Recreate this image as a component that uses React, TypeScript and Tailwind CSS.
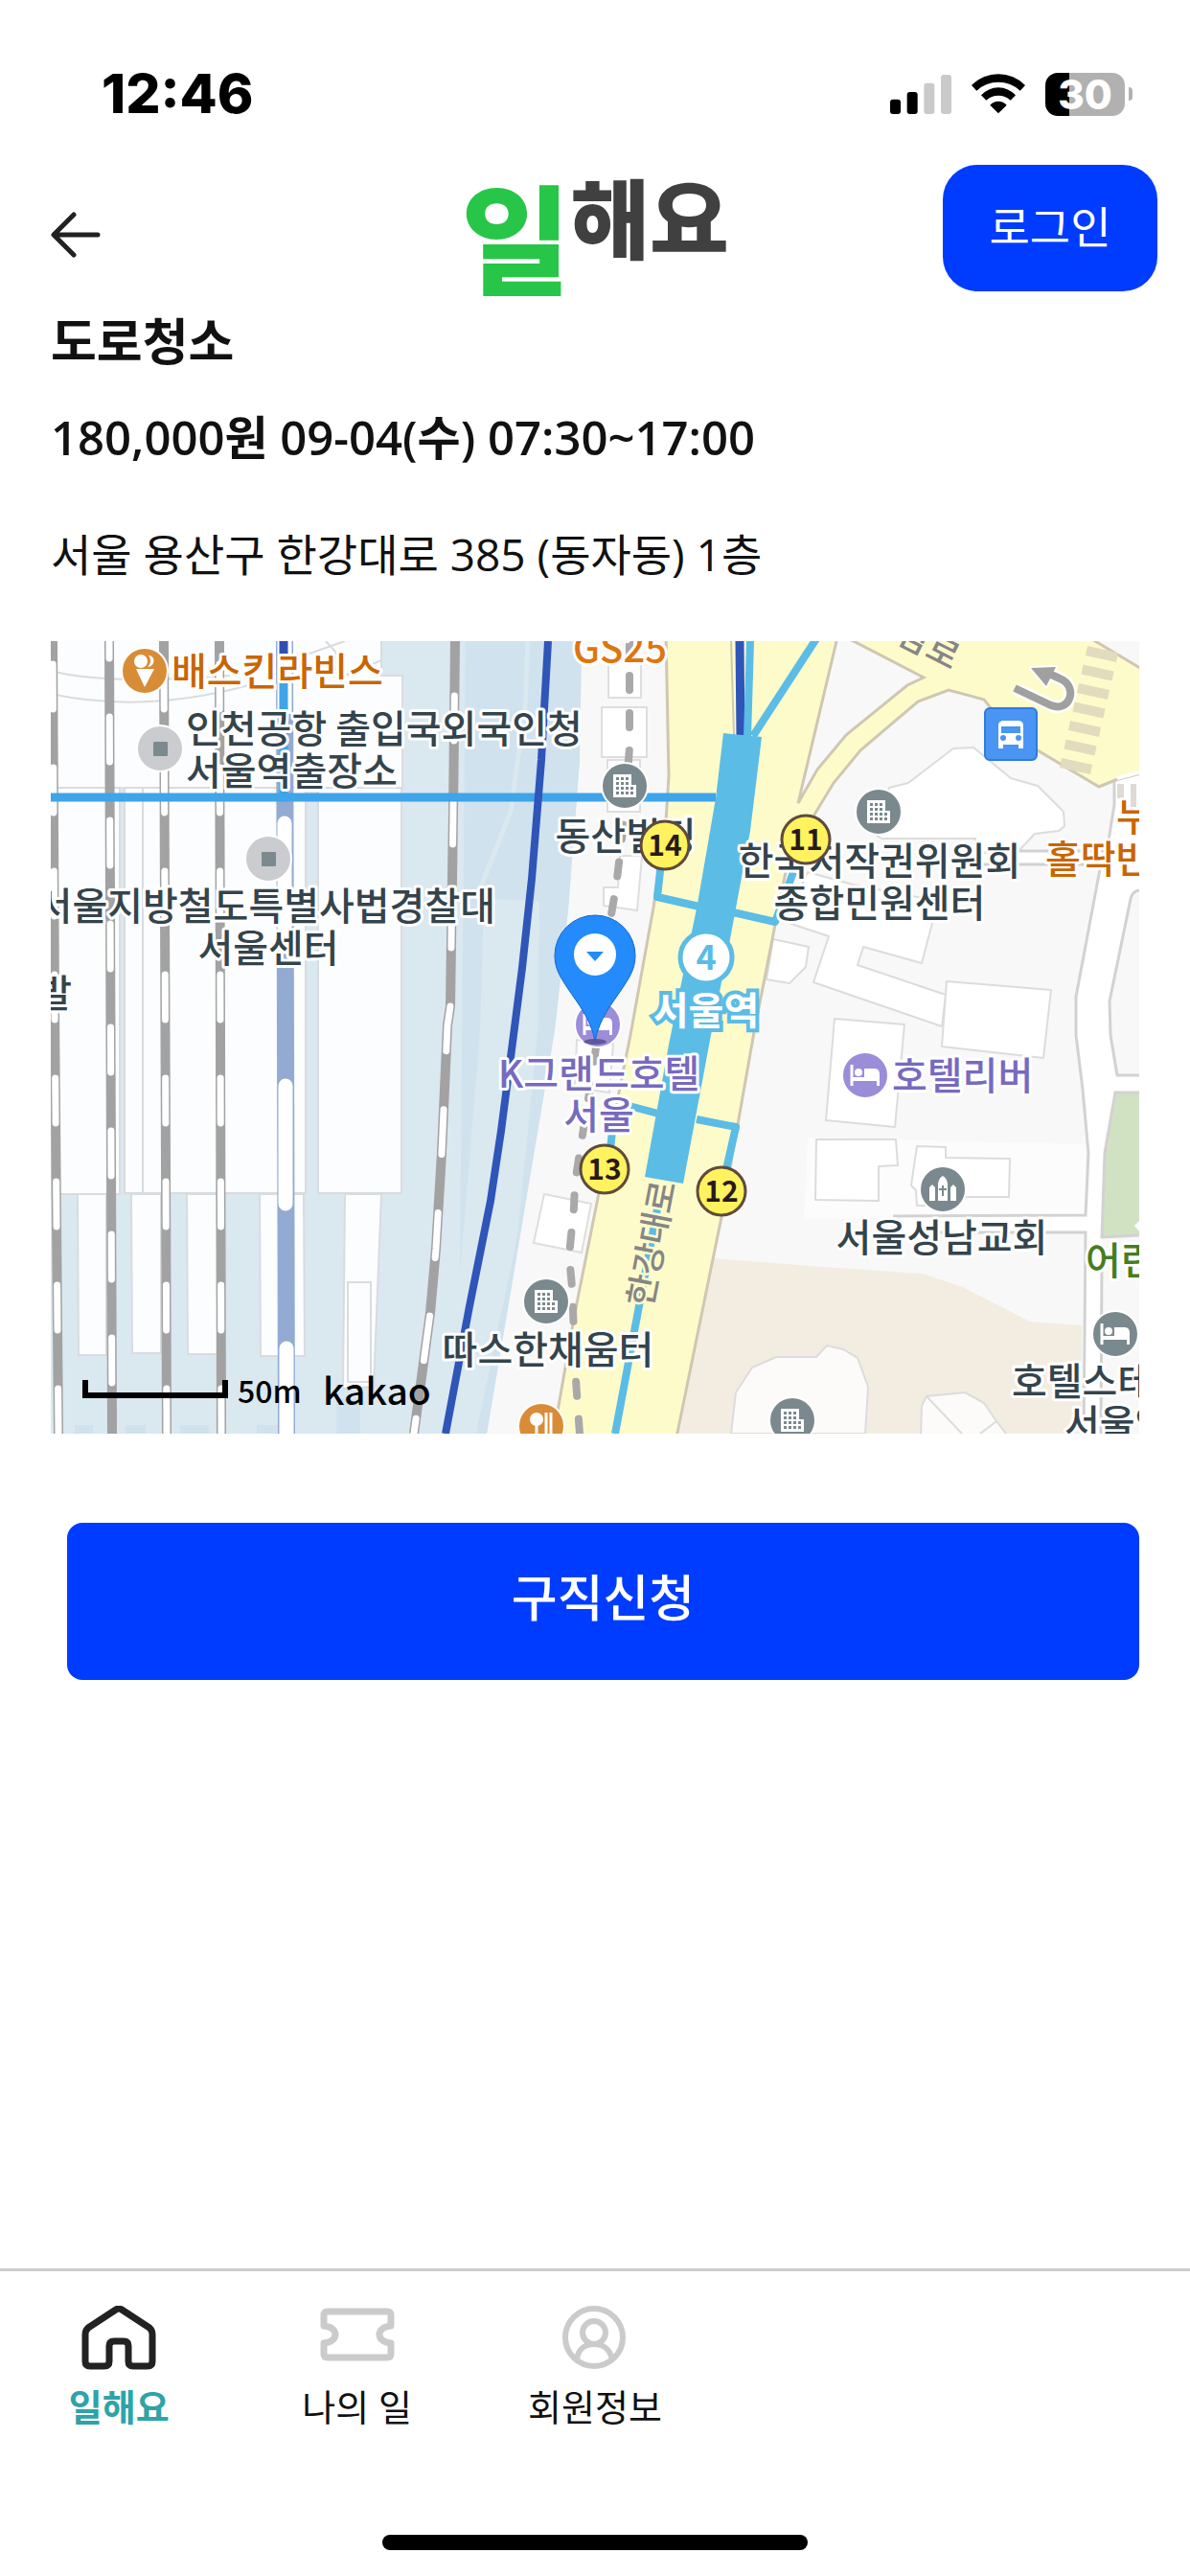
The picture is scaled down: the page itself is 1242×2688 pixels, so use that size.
import type { ReactNode } from "react";

const INK = "#34444c";
const ORANGE = "#c96500";
const PURPLE = "#776abf";

function StatusBar() {
  return (
    <div className="flex items-center justify-between pt-[70px] pr-[60px] pl-[106px]">
      <time className="font-[Inter] text-[57px] leading-[56px] font-extrabold text-black">12:46</time>
      <div className="flex items-center">
        <svg className="h-[41px] w-[64px]" viewBox="0 0 192 123" aria-label="Signal" role="img">
          <rect x="0" y="77" width="33" height="46" rx="9" fill="#000" />
          <rect x="53" y="54" width="33" height="69" rx="9" fill="#000" />
          <rect x="106" y="26" width="33" height="97" rx="9" fill="#cacaca" />
          <rect x="159" y="0" width="33" height="123" rx="9" fill="#cacaca" />
        </svg>
        <svg className="ml-[21px] h-[42px] w-[56px]" viewBox="0 0 168 126" aria-label="Wi-Fi" role="img">
          <path d="M0 36A118 118 0 0 1 168 36L152 53A99 99 0 0 0 16 53Z" />
          <path d="M30 67A73 73 0 0 1 138 67L122 83A56 56 0 0 0 46 83Z" />
          <path d="M58 98A34 34 0 0 1 110 98L84 124Z" />
        </svg>
        <div className="ml-[21px] flex items-center gap-1">
          <div className="flex h-[45px] w-[83px] items-center justify-center rounded-[13px] bg-[linear-gradient(90deg,#000_30%,#b1b1b1_30%)] font-[Inter] text-[42px] leading-[45px] font-extrabold text-white">
            30
          </div>
          <div className="h-[14px] w-[4px] rounded-r-full bg-[#b1b1b1]" />
        </div>
      </div>
    </div>
  );
}

function BuildingPoi({ x, y }: { x: number; y: number }) {
  const dots: ReactNode[] = [];
  for (let r = 0; r < 4; r++) {
    for (let c = 0; c < 4; c++) {
      if (c === 3 && r < 2) continue;
      dots.push(<rect key={`${r}-${c}`} x={-9 + c * 5} y={-9 + r * 5} width="3" height="3" fill="#7a898e" />);
    }
  }
  return (
    <g transform={`translate(${x} ${y})`}>
      <circle r="24" fill="#7a898e" stroke="#fff" strokeWidth="2" />
      <path d="M-12 -12H7V-1H12V12H-12Z" fill="#fff" />
      {dots}
    </g>
  );
}

function BedPoi({ x, y, color }: { x: number; y: number; color: string }) {
  return (
    <g transform={`translate(${x} ${y})`}>
      <circle r="24" fill={color} stroke="#fff" strokeWidth="2" />
      <path d="M-14 -11V11" stroke="#fff" strokeWidth="3" />
      <path d="M-1 -7H10Q15 -7 15 -1V11H12V6H-14V2H-1Z" fill="#fff" />
      <circle cx="-7" cy="-3" r="4" fill="#fff" />
    </g>
  );
}

function PlainPoi({ x, y }: { x: number; y: number }) {
  return (
    <g>
      <circle cx={x} cy={y} r="24" fill="#cbccd0" stroke="#fff" strokeWidth="2" />
      <rect x={x - 7} y={y - 7} width="15" height="15" rx="1" fill="#7b8a8f" />
    </g>
  );
}

function ExitBadge({ x, y, n }: { x: number; y: number; n: number }) {
  return (
    <g>
      <circle cx={x} cy={y} r="25" fill="#fef35f" stroke="#5f4a3c" strokeWidth="3" />
      <text x={x} y={y + 11} textAnchor="middle" fontSize="30" fontWeight="700" fill="#2b1818">
        {n}
      </text>
    </g>
  );
}

type Label = { x: number; y: number; t: string; c?: string; a?: "start" | "middle" | "end" };

const LABELS: Label[] = [
  { x: 179, y: 715, t: "배스킨라빈스", c: ORANGE, a: "start" },
  { x: 194, y: 775, t: "인천공항 출입국외국인청", a: "start" },
  { x: 194, y: 819, t: "서울역출장소", a: "start" },
  { x: 517, y: 960, t: "서울지방철도특별사법경찰대", a: "end" },
  { x: 280, y: 1004, t: "서울센터" },
  { x: 75, y: 1051, t: "발", a: "end" },
  { x: 647, y: 691, t: "GS25", c: "#e0740f" },
  { x: 653, y: 887, t: "동산빌딩" },
  { x: 918, y: 913, t: "한국저작권위원회" },
  { x: 918, y: 957, t: "종합민원센터" },
  { x: 1165, y: 867, t: "누", c: ORANGE, a: "start" },
  { x: 1091, y: 911, t: "홀딱반", c: ORANGE, a: "start" },
  { x: 625, y: 1135, t: "K그랜드호텔", c: PURPLE },
  { x: 625, y: 1178, t: "서울", c: PURPLE },
  { x: 931, y: 1137, t: "호텔리버", c: PURPLE, a: "start" },
  { x: 983, y: 1306, t: "서울성남교회" },
  { x: 1133, y: 1330, t: "어린", c: "#467d22", a: "start" },
  { x: 572, y: 1423, t: "따스한채움터" },
  { x: 1056, y: 1456, t: "호텔스테", a: "start" },
  { x: 1111, y: 1500, t: "서울역", a: "start" },
];

const RAILS = [
  { d: "M55 669L57 1050L61 1496", o: -24 },
  { d: "M114 669L117 1496", o: 29 },
  { d: "M171 669L174 1496", o: -24 },
  { d: "M229 669L231 1496", o: -24 },
  { d: "M475 669L473 850L470 1050L467 1070L461 1203L455 1303L449 1370L440 1437L432 1496", o: -57 },
];

function StationMap() {
  return (
    <svg
      className="block h-auto w-full font-['Noto_Sans_CJK_KR',sans-serif]"
      viewBox="53 669 1136 827"
      role="img"
      aria-label="서울역 주변 지도"
    >
      <rect x="53" y="669" width="1136" height="827" fill="#f8f8f8" />

      {/* rail yard */}
      <path d="M53 669H607L605 793L593 950L579 1075L508 1496H53Z" fill="#dae8f0" />
      <path d="M486 669H607L605 793L593 950L579 1075L508 1496H497L540 1290L562 1070L563 940L505 938L501 1075L480 1330Z" fill="#cfe2ee" />
      <path d="M551 669L548 737L533 847L500 930" fill="none" stroke="#dae8f0" strokeWidth="5" />
      <g fill="#fbfdff" stroke="#d9dcde" strokeWidth="2">
        <path d="M53 669H398V705H420V821H319H53Z" strokeWidth="0" />
        <path d="M398 669V705H420V825" fill="none" />
        <path d="M53 822H125V1246H53Z" />
        <path d="M130 822H319V1245H130Z" />
        <path d="M332 822H419V1245H332Z" />
        <path d="M149 822V1245M53 700Q110 715 240 705M53 724Q150 745 260 715M300 690L360 669M340 669L350 680V700M398 689L360 705" fill="none" />
        <path d="M81 1246H111V1414H82ZM137 1246H168V1412H138ZM195 1246H227V1413H196ZM271 1246H317L318 1415H272ZM360 1246H398L390 1447L358 1449Z" />
        <path d="M363 1338H387V1442H363Z" />
      </g>
      <path d="M78 1487H97V1496H78ZM131 1487H152V1496H131ZM188 1487H218V1496H188ZM268 1487H290V1496H268ZM351 1460H376V1496H351Z" fill="#cfe2ee" />

      {RAILS.map((r) => (
        <g key={r.d} fill="none">
          <path d={r.d} stroke="#a2a2a2" strokeWidth="10" />
          <path d={r.d} stroke="#fff" strokeWidth="7" strokeLinecap="round" strokeDasharray="47 61" strokeDashoffset={r.o} />
        </g>
      ))}
      <path d="M297 669L299 1496" stroke="#93abd2" strokeWidth="18" />
      <path d="M297 669V745" stroke="#fff" strokeWidth="15" />
      <path d="M297 859V982M298 1133V1256M299 1407V1496" stroke="#fff" strokeWidth="15" strokeLinecap="round" />
      <path d="M296 669V683" stroke="#2f4fb5" strokeWidth="9" />
      <path d="M296 712V832" stroke="#3fa4e8" strokeWidth="9" />

      {/* sidewalk blocks */}
      <g fill="#fff" stroke="#dedede" strokeWidth="2">
        <path d="M635 690H669V728H635ZM628 738H675V790H628ZM634 793H668V847H634ZM647 893H670L665 950L630 945V926H645Z" />
        <path d="M568 1246L617 1256L607 1307L557 1297ZM602 1085L640 1089L636 1140L600 1135Z" />
      </g>

      {/* buildings and lanes on the east side */}
      <path d="M843 1187L1133 1194V1268L839 1272Z" fill="#fcfcfc" />
      <path d="M1164 814L1163 840L1148 907L1123 1040V1080L1130 1137L1136 1203L1133 1268H932V1286H1133L1131 1496H1149L1150 1291L1153 1203L1164 1140H1189V1122H1166L1159 1080L1158 1045L1180 938L1189 929V806Z" fill="#fff" />
      <path d="M1063 889H1155V902H1020V889Z" fill="#fff" />
      <path d="M1189 1140H1164L1153 1203L1150 1291L1189 1289Z" fill="#d1e2c3" />
      <g fill="none" stroke="#d2d2d2" strokeWidth="3">
        <path d="M1163 815V840L1156 883M1148 907L1123 1040V1080L1130 1137L1136 1203L1133 1268L932 1269" />
        <path d="M1189 929Q1182 930 1180 938L1158 1045L1159 1080L1166 1122H1189M1189 1140H1164L1153 1203L1150 1291L1189 1289" />
        <path d="M970 1286H1133L1131 1496M1150 1310L1149 1496M1063 888H1155M1020 902H1148" />
      </g>
      <g fill="#fff" stroke="#dcdcdc" strokeWidth="2" strokeLinejoin="round">
        <path d="M915 872L928 822L948 817L995 781L1016 780L1055 812L1083 820L1110 847L1111 862L1105 867L1080 870L1063 888L1020 890L1018 875H920Z" />
        <path d="M843 910L890 923L978 940L973 963L962 1005L901 988L895 1007L987 1038L983 1071L849 1025L865 977L820 962Z" />
        <path d="M807 980L844 988L841 1009L824 1026L800 1022Z" />
        <path d="M988 1024L1097 1033L1089 1104L983 1092Z" />
        <path d="M871 1063L944 1069L934 1176L862 1169Z" />
        <path d="M852 1189H935L937 1216L917 1217V1253L851 1252Z" />
        <path d="M957 1196L987 1197V1208L1054 1209L1053 1249H1000V1258H957L956 1242L951 1237Z" />
      </g>
      <path d="M743 1313L860 1322L963 1329L1005 1343L1075 1379L1129 1383V1496H707Z" fill="#f3ede1" />
      <g fill="#fcfbf9" stroke="#dcdcdc" strokeWidth="2">
        <path d="M763 1496L768 1453L785 1427L810 1416H852L863 1404L880 1408L895 1417L906 1447L903 1496Z" />
        <path d="M961 1496L962 1467L967 1457L1007 1453L1027 1464L1040 1483L1050 1496" />
        <path d="M967 1457L1004 1496M1040 1483L1023 1496" />
      </g>

      {/* main road */}
      <path
        fillRule="evenodd"
        fill="#fefbcb"
        stroke="#cfc7b2"
        strokeWidth="3"
        d="M695 660L698 810L695 857L682 947L658 1080L600 1370L583 1467L577 1500H706L753 1270L787 1077L808 970L820 910L832 880L850 850L870 817L898 783L958 732L990 720L1027 730L1035 740L1083 783L1147 821L1164 814L1195 806V700L1143 669L1130 660ZM874 665L833 838L853 803L883 767L947 715L964 707L885 666Z"
      />
      <path d="M763 669L766 767" stroke="#cfc7b2" strokeWidth="2" />
      <path d="M1166 812L1189 806" stroke="#fff" strokeWidth="4" />
      <g stroke="#e2dbbd" strokeWidth="10">
        {[0, 1, 2, 3, 4, 5, 6].map((i) => (
          <path key={i} d={`M${1134 - i * 4.5} ${679 + i * 19.5}l32 7`} />
        ))}
      </g>
      <path d="M1166 818H1173V833H1166ZM1180 818H1186V842H1180Z" fill="#dedad4" />
      <path
        d="M657 669V780L652 850L643 925L637 960L620 1110L607 1190L600 1235L599 1260L594 1310L597 1343L601 1440L605 1496"
        fill="none"
        stroke="#aaa8a8"
        strokeWidth="8"
        strokeLinecap="round"
        strokeDasharray="15 24"
        strokeDashoffset="3"
      />

      {/* subway lines */}
      <path d="M53 832H747" stroke="#3fa4e8" strokeWidth="9" />
      <path d="M572 669L565 793L555 917L545 1010L536 1080L523 1180L512 1253L490 1363L465 1496" fill="none" stroke="#2f55b8" strokeWidth="8" />
      <path d="M772 669L773 770" stroke="#2f55b8" strokeWidth="9" />
      <g fill="none" stroke="#5bbce6" strokeWidth="8" strokeLinejoin="round">
        <path d="M783 669L780 770M853 665L786 768" />
        <path d="M690 900L686 936L730 946M765 952L809 962L828 910" />
        <path d="M637 1200L640 1170L653 1153L687 1162M727 1168L768 1176L758 1220" />
        <path d="M690 1240L642 1496" />
      </g>
      <path d="M755 765L795 769L783 867L762 980L742 1080L713 1235L673 1228L698 1090L728 943L747 833Z" fill="#5bbce6" />

      {/* U-turn mark and bus stop */}
      <g stroke="#fff" strokeWidth="4" strokeLinejoin="round" paintOrder="stroke">
        <path d="M1059 718L1097 736C1117 744 1126 716 1106 708L1095 703" fill="none" strokeWidth="13" />
        <path d="M1076 697L1102 696L1092 716Z" fill="#a0a0a0" />
        <path d="M1059 718L1097 736C1117 744 1126 716 1106 708L1095 703" fill="none" stroke="#a0a0a0" strokeWidth="8" strokeLinejoin="miter" />
      </g>
      <rect x="1028" y="739" width="54" height="54" rx="5" fill="#4a94f3" stroke="#2f7bdb" strokeWidth="2" />
      <path d="M1042 757Q1042 752 1048 752H1062Q1068 752 1068 757V781H1063V777H1047V781H1042Z" fill="#fff" />
      <path d="M1045 758H1065V765H1045Z" fill="#4a94f3" />
      <circle cx="1047" cy="770" r="3" fill="#4a94f3" />
      <circle cx="1063" cy="770" r="3" fill="#4a94f3" />

      {/* street names */}
      <g fill="#868686" fontSize="36" fontWeight="500" stroke="#fefbcb" strokeWidth="5" paintOrder="stroke" textAnchor="middle">
        <text transform="translate(693 1300) rotate(-79)">한강대로</text>
        <text transform="translate(949 677) rotate(27)">후암로</text>
      </g>

      {/* points of interest */}
      <circle cx="151" cy="700" r="24" fill="#d98c36" stroke="#fff" strokeWidth="2" />
      <path d="M142 698H161L151 717Z" fill="#fff" />
      <circle cx="147" cy="690" r="7" fill="#fff" />
      <path d="M155 684C162 684 163 695 154 696C158 692 158 688 155 684Z" fill="#fff" />
      <PlainPoi x={167} y={781} />
      <PlainPoi x={280} y={896} />
      <BuildingPoi x={652} y={820} />
      <BuildingPoi x={917} y={847} />
      <BuildingPoi x={570} y={1358} />
      <BuildingPoi x={827} y={1482} />
      <BedPoi x={903} y={1122} color="#9b8dd8" />
      <BedPoi x={624} y={1069} color="#9b8dd8" />
      <BedPoi x={1164} y={1392} color="#7a898e" />
      <circle cx="984" cy="1241" r="24" fill="#7a898e" stroke="#fff" strokeWidth="2" />
      <path d="M979 1253V1235Q980 1229 984 1227Q988 1229 989 1235V1253ZM970 1253V1239L973 1236L976 1239V1253ZM992 1253V1239L995 1236L998 1239V1253Z" fill="#fff" />
      <path d="M984 1237V1248M980 1241H988" stroke="#7a898e" strokeWidth="2" />
      <circle cx="565" cy="1488" r="24" fill="#d98c36" stroke="#fff" strokeWidth="2" />
      <circle cx="560" cy="1481" r="7" fill="#fff" />
      <path d="M560 1485V1500M570 1474V1500M575 1474V1500" stroke="#fff" strokeWidth="3" />
      <path d="M1184 1279L1189 1274V1285Z" fill="#fff" />

      <g fontSize="40" fontWeight="500" stroke="#fff" strokeWidth="6" strokeLinejoin="round" paintOrder="stroke">
        {LABELS.map((l) => (
          <text key={`${l.t}-${l.y}`} x={l.x} y={l.y} textAnchor={l.a ?? "middle"} fill={l.c ?? INK}>
            {l.t}
          </text>
        ))}
      </g>

      <circle cx="737" cy="999" r="27" fill="#fff" stroke="#5bbce6" strokeWidth="5" />
      <text x="737" y="1012" textAnchor="middle" fontSize="36" fontWeight="700" fill="#5bbce6">
        4
      </text>
      <text x="737" y="1069" textAnchor="middle" fontSize="40" fontWeight="700" fill="#fff" stroke="#5bbce6" strokeWidth="8" paintOrder="stroke">
        서울역
      </text>
      <ExitBadge x={694} y={882} n={14} />
      <ExitBadge x={841} y={876} n={11} />
      <ExitBadge x={631} y={1220} n={13} />
      <ExitBadge x={753} y={1243} n={12} />

      {/* location pin */}
      <ellipse cx="621" cy="1087" rx="12" ry="3" fill="#3d3470" opacity="0.6" />
      <path d="M621 1086C616 1062 603 1047 593 1032C585 1020 579 1011 579 997A42 42 0 0 1 663 997C663 1011 657 1020 649 1032C639 1047 626 1062 621 1086Z" fill="#238bfb" stroke="#1766cc" strokeWidth="1" />
      <circle cx="621" cy="996" r="22" fill="#fff" />
      <path d="M612 993H630L621 1003Z" fill="#238bfb" />

      {/* scale */}
      <path d="M89 1440V1456H235V1440" fill="none" stroke="#000" strokeWidth="6" />
      <text x="248" y="1464" fontSize="32" fontWeight="500">
        50m
      </text>
      <text x="337" y="1466" fontSize="39" fontWeight="500">
        kakao
      </text>
    </svg>
  );
}

function HomeIcon() {
  return (
    <svg className="h-[67px] w-[78px]" viewBox="0 0 78 67" fill="none" stroke="#222" strokeWidth="7" strokeLinejoin="round">
      <path d="M4 30Q4 26 7 23L36 4Q39 2 42 4L71 23Q74 26 74 30V58Q74 63 69 63H54Q49 63 49 58V42Q49 37 44 37H34Q29 37 29 42V58Q29 63 24 63H9Q4 63 4 58Z" />
    </svg>
  );
}

function TicketIcon() {
  return (
    <svg className="h-[67px] w-[78px]" viewBox="0 0 78 67" fill="none" stroke="#cbcbcb" strokeWidth="7" strokeLinejoin="round">
      <path d="M8 6H70Q74 6 74 10V21C58 22 58 38 74 39V50Q74 54 70 54H8Q4 54 4 50V39C20 38 20 22 4 21V10Q4 6 8 6Z" />
    </svg>
  );
}

function UserIcon() {
  return (
    <svg className="h-[67px] w-[67px]" viewBox="0 0 67 67" fill="none" stroke="#cbcbcb" strokeWidth="6">
      <circle cx="33" cy="33" r="30" />
      <circle cx="33" cy="28" r="12" />
      <path d="M15 57C16 45 24 40 33 40S50 45 52 57" />
    </svg>
  );
}

function Tab({ label, icon, active = false }: { label: string; icon: ReactNode; active?: boolean }) {
  return (
    <a href="#" aria-current={active ? "page" : undefined} className="flex w-1/5 flex-col items-center gap-[10px]">
      {icon}
      <span className={active ? "text-[38px] leading-[56px] font-bold text-[#2fa3a8]" : "text-[38px] leading-[56px] text-[#111]"}>
        {label}
      </span>
    </a>
  );
}

export default function App() {
  return (
    <div className="flex min-h-screen flex-col bg-white font-['Open_Sans','Noto_Sans_CJK_KR',sans-serif] text-[#111]">
      <StatusBar />

      <header className="mt-[46px] grid grid-cols-[1fr_auto_1fr] items-start px-[34px]">
        <button type="button" aria-label="뒤로" className="mt-[49px] ml-[19px] w-[52px]">
          <svg className="h-[48px] w-[52px]" viewBox="0 0 52 48" fill="none" stroke="#222" strokeWidth="5" strokeLinecap="round" strokeLinejoin="round">
            <path d="M49 24H4M24 3L3 24L24 45" />
          </svg>
        </button>
        <div className="flex h-[142px] items-start font-['Noto_Sans_CJK_KR',sans-serif] font-black">
          <span className="text-[124px] leading-[144px] text-[#27c648]">일</span>
          <span className="text-[90px] leading-[104px] text-[#404040]">해요</span>
        </div>
        <button type="button" className="h-[132px] w-[224px] justify-self-end rounded-[36px] bg-[#003cff] pb-1 text-[46px] leading-[60px] text-white">
          로그인
        </button>
      </header>

      <main className="px-[53px]">
        <h1 className="mt-[6px] text-[52px] leading-[72px] font-bold">도로청소</h1>
        <p className="mt-[32px] text-[49px] leading-[64px] font-semibold">180,000원 09-04(수) 07:30~17:00</p>
        <p className="mt-[58px] mb-[59px] text-[46px] leading-[64px]">서울 용산구 한강대로 385 (동자동) 1층</p>
        <StationMap />
        <div className="mt-[93px] pl-[17px]">
          <button type="button" className="h-[164px] w-full rounded-[16px] bg-[#003cff] pb-2 text-[52px] leading-[72px] font-medium text-white">
            구직신청
          </button>
        </div>
      </main>

      <nav className="mt-auto flex h-[278px] border-t-[3px] border-[#ccc] pt-[36px]">
        <Tab label="일해요" icon={<HomeIcon />} active />
        <Tab label="나의 일" icon={<TicketIcon />} />
        <Tab label="회원정보" icon={<UserIcon />} />
      </nav>
      <div className="mx-auto mb-[27px] h-[16px] w-[444px] rounded-full bg-black" />
    </div>
  );
}
